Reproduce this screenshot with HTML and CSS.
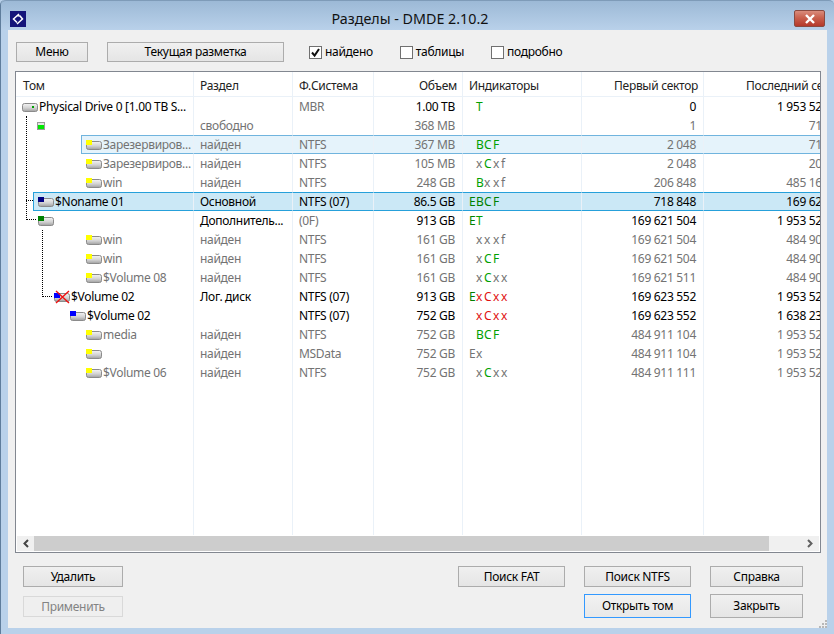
FILE: index.html
```html
<!DOCTYPE html>
<html lang="ru">
<head>
<meta charset="utf-8">
<title>Разделы - DMDE 2.10.2</title>
<link rel="stylesheet" href="styles.css">
</head>
<body>
<svg class="defs" width="0" height="0" aria-hidden="true">
  <defs>
    <linearGradient id="disk" x1="0" y1="0" x2="0" y2="1">
      <stop offset="0" stop-color="#f4f4f4"/>
      <stop offset="0.55" stop-color="#d2d2d2"/>
      <stop offset="1" stop-color="#a0a0a0"/>
    </linearGradient>
    <symbol id="vol" viewBox="0 0 16 11">
      <rect x="0.5" y="1.5" width="15" height="8" rx="2" fill="url(#disk)" stroke="#8b8b8b"/>
    </symbol>
  </defs>
</svg>
<div class="window">
  <header class="titlebar">
    <svg class="appicon" width="16" height="16" viewBox="0 0 16 16">
      <rect width="16" height="16" fill="#14147a"/>
      <path d="M9 3 3.500 8 7 11.500M7 4.500 10 5 12.500 8 7 13" fill="none" stroke="#fff" stroke-width="1.500"/>
    </svg>
    <div class="title">Разделы - DMDE 2.10.2</div>
    <div class="close">
      <svg width="12" height="10" viewBox="0 0 12 10"><path d="M2 1 10 9M10 1 2 9" stroke="#fff" stroke-width="2.400"/></svg>
    </div>
  </header>
  <main class="client">
    <div class="toolbar">
      <button class="btn menu">Меню</button>
      <button class="btn layout">Текущая разметка</button>
      <label class="check c1"><span class="box"><svg width="11" height="11" viewBox="0 0 11 11"><path d="M2 5.500 4.600 8.600 9 2" fill="none" stroke="#111" stroke-width="2"/></svg></span>найдено</label>
      <label class="check c2"><span class="box"></span>таблицы</label>
      <label class="check c3"><span class="box"></span>подробно</label>
    </div>
    <section class="table">
      <div class="row head">
        <div class="cell">Том</div>
        <div class="cell">Раздел</div>
        <div class="cell">Ф.Система</div>
        <div class="cell num">Объем</div>
        <div class="cell">Индикаторы</div>
        <div class="cell num">Первый сектор</div>
        <div class="cell num">Последний сектор</div>
      </div>
      <div class="rows">
        <i class="dot v v1"></i><i class="dot h h1"></i><i class="dot h h2"></i><i class="dot v v2"></i><i class="dot h h3"></i>

        <div class="row">
          <div class="cell name d0"><svg class="ic" width="16" height="11" viewBox="0 0 16 11"><use href="#vol"/><rect x="10" y="4" width="2" height="2" fill="#00a000"/></svg>Physical Drive 0 [1.00 TB S...</div>
          <div class="cell"></div>
          <div class="cell g">MBR</div>
          <div class="cell num">1.00 TB</div>
          <div class="cell ind"><b class="e"></b><b class="ok">T</b></div>
          <div class="cell num">0</div>
          <div class="cell num">1 953 525 167</div>
        </div>

        <div class="row g">
          <div class="cell name d1s"><svg class="ic" width="8" height="8" viewBox="0 0 8 8"><rect x="0.500" y="0.500" width="7" height="7" fill="#e4e4e4" stroke="#9a9a9a"/><rect x="1" y="3" width="6" height="4" fill="#00e800"/></svg></div>
          <div class="cell">свободно</div>
          <div class="cell"></div>
          <div class="cell num">368 MB</div>
          <div class="cell ind"></div>
          <div class="cell num">1</div>
          <div class="cell num">718 847</div>
        </div>

        <div class="row g hover">
          <div class="cell name d3"><svg class="ic" width="16" height="11" viewBox="0 0 16 11"><use href="#vol"/><rect width="6" height="5" fill="#ffff00"/></svg>Зарезервиров...</div>
          <div class="cell">найден</div>
          <div class="cell">NTFS</div>
          <div class="cell num">367 MB</div>
          <div class="cell ind"><b class="e"></b><b class="ok">B</b><b class="c ok">C</b><b class="ok">F</b></div>
          <div class="cell num">2 048</div>
          <div class="cell num">718 847</div>
        </div>

        <div class="row g">
          <div class="cell name d3"><svg class="ic" width="16" height="11" viewBox="0 0 16 11"><use href="#vol"/><rect width="6" height="5" fill="#ffff00"/></svg>Зарезервиров...</div>
          <div class="cell">найден</div>
          <div class="cell">NTFS</div>
          <div class="cell num">105 MB</div>
          <div class="cell ind"><b class="e"></b><b>x</b><b class="c ok">C</b><b>x</b><b>f</b></div>
          <div class="cell num">2 048</div>
          <div class="cell num">206 847</div>
        </div>

        <div class="row g">
          <div class="cell name d3"><svg class="ic" width="16" height="11" viewBox="0 0 16 11"><use href="#vol"/><rect width="6" height="5" fill="#ffff00"/></svg>win</div>
          <div class="cell">найден</div>
          <div class="cell">NTFS</div>
          <div class="cell num">248 GB</div>
          <div class="cell ind"><b class="e"></b><b class="ok">B</b><b class="c">x</b><b>x</b><b>f</b></div>
          <div class="cell num">206 848</div>
          <div class="cell num">485 167 103</div>
        </div>

        <div class="row selected">
          <div class="cell name d1"><svg class="ic" width="16" height="11" viewBox="0 0 16 11"><use href="#vol"/><rect width="6" height="5" fill="#000080"/></svg>$Noname 01</div>
          <div class="cell">Основной</div>
          <div class="cell">NTFS (07)</div>
          <div class="cell num">86.5 GB</div>
          <div class="cell ind"><b class="e dk">E</b><b class="dk">B</b><b class="c dk">C</b><b class="dk">F</b></div>
          <div class="cell num">718 848</div>
          <div class="cell num">169 621 503</div>
        </div>

        <div class="row">
          <div class="cell name d1p"><svg class="ic" width="16" height="11" viewBox="0 0 16 11"><use href="#vol"/><rect width="6" height="5" fill="#008000"/></svg></div>
          <div class="cell">Дополнитель...</div>
          <div class="cell g">(0F)</div>
          <div class="cell num">913 GB</div>
          <div class="cell ind"><b class="e dk">E</b><b class="ok">T</b></div>
          <div class="cell num">169 621 504</div>
          <div class="cell num">1 953 525 167</div>
        </div>

        <div class="row g">
          <div class="cell name d3"><svg class="ic" width="16" height="11" viewBox="0 0 16 11"><use href="#vol"/><rect width="6" height="5" fill="#ffff00"/></svg>win</div>
          <div class="cell">найден</div>
          <div class="cell">NTFS</div>
          <div class="cell num">161 GB</div>
          <div class="cell ind"><b class="e"></b><b>x</b><b class="c">x</b><b>x</b><b>f</b></div>
          <div class="cell num">169 621 504</div>
          <div class="cell num">484 909 055</div>
        </div>

        <div class="row g">
          <div class="cell name d3"><svg class="ic" width="16" height="11" viewBox="0 0 16 11"><use href="#vol"/><rect width="6" height="5" fill="#ffff00"/></svg>win</div>
          <div class="cell">найден</div>
          <div class="cell">NTFS</div>
          <div class="cell num">161 GB</div>
          <div class="cell ind"><b class="e"></b><b>x</b><b class="c ok">C</b><b class="ok">F</b></div>
          <div class="cell num">169 621 504</div>
          <div class="cell num">484 909 055</div>
        </div>

        <div class="row g">
          <div class="cell name d3"><svg class="ic" width="16" height="11" viewBox="0 0 16 11"><use href="#vol"/><rect width="6" height="5" fill="#ffff00"/></svg>$Volume 08</div>
          <div class="cell">найден</div>
          <div class="cell">NTFS</div>
          <div class="cell num">161 GB</div>
          <div class="cell ind"><b class="e"></b><b>x</b><b class="c ok">C</b><b>x</b><b>x</b></div>
          <div class="cell num">169 621 511</div>
          <div class="cell num">484 909 062</div>
        </div>

        <div class="row">
          <div class="cell name d2"><svg class="ic" width="16" height="14" viewBox="0 0 16 14"><g transform="translate(0 2)"><use href="#vol" width="16" height="11"/><rect y="1" width="6" height="5" fill="#0000ff"/></g><path d="M2 1 15 13M15 1 2 13" stroke="#f01010" stroke-width="1.400"/></svg>$Volume 02</div>
          <div class="cell">Лог. диск</div>
          <div class="cell">NTFS (07)</div>
          <div class="cell num">913 GB</div>
          <div class="cell ind"><b class="e dk">E</b><b class="bad">x</b><b class="c bad">C</b><b class="bad">x</b><b class="bad">x</b></div>
          <div class="cell num">169 623 552</div>
          <div class="cell num">1 953 525 167</div>
        </div>

        <div class="row">
          <div class="cell name d2b"><svg class="ic" width="16" height="11" viewBox="0 0 16 11"><use href="#vol"/><rect width="6" height="5" fill="#0000ff"/></svg>$Volume 02</div>
          <div class="cell"></div>
          <div class="cell">NTFS (07)</div>
          <div class="cell num">752 GB</div>
          <div class="cell ind"><b class="e"></b><b class="bad">x</b><b class="c bad">C</b><b class="bad">x</b><b class="bad">x</b></div>
          <div class="cell num">169 623 552</div>
          <div class="cell num">1 638 234 111</div>
        </div>

        <div class="row g">
          <div class="cell name d3"><svg class="ic" width="16" height="11" viewBox="0 0 16 11"><use href="#vol"/><rect width="6" height="5" fill="#ffff00"/></svg>media</div>
          <div class="cell">найден</div>
          <div class="cell">NTFS</div>
          <div class="cell num">752 GB</div>
          <div class="cell ind"><b class="e"></b><b class="ok">B</b><b class="c ok">C</b><b class="ok">F</b></div>
          <div class="cell num">484 911 104</div>
          <div class="cell num">1 953 525 167</div>
        </div>

        <div class="row g">
          <div class="cell name d3"><svg class="ic" width="16" height="11" viewBox="0 0 16 11"><use href="#vol"/><rect width="6" height="5" fill="#ffff00"/></svg></div>
          <div class="cell">найден</div>
          <div class="cell">MSData</div>
          <div class="cell num">752 GB</div>
          <div class="cell ind"><b class="e">E</b><b>x</b></div>
          <div class="cell num">484 911 104</div>
          <div class="cell num">1 953 525 167</div>
        </div>

        <div class="row g">
          <div class="cell name d3"><svg class="ic" width="16" height="11" viewBox="0 0 16 11"><use href="#vol"/><rect width="6" height="5" fill="#ffff00"/></svg>$Volume 06</div>
          <div class="cell">найден</div>
          <div class="cell">NTFS</div>
          <div class="cell num">752 GB</div>
          <div class="cell ind"><b class="e"></b><b>x</b><b class="c ok">C</b><b>x</b><b>x</b></div>
          <div class="cell num">484 911 111</div>
          <div class="cell num">1 953 525 167</div>
        </div>

        <div class="row filler">
          <div class="cell"></div><div class="cell"></div><div class="cell"></div><div class="cell"></div><div class="cell"></div><div class="cell"></div><div class="cell"></div>
        </div>
      </div>
      <div class="scrollbar">
        <div class="arrow"><svg width="8" height="9" viewBox="0 0 8 9"><path d="M6 1 2.500 4.500 6 8" fill="none" stroke="#444" stroke-width="2"/></svg></div>
        <div class="thumb"></div>
        <div class="track"><svg width="8" height="9" viewBox="0 0 8 9"><path d="M2 1 5.500 4.500 2 8" fill="none" stroke="#606060" stroke-width="2"/></svg></div>
      </div>
    </section>
    <footer class="actions">
      <div class="stack wide">
        <button class="btn">Удалить</button>
        <button class="btn off">Применить</button>
      </div>
      <div class="stack fat">
        <button class="btn">Поиск FAT</button>
      </div>
      <div class="stack mid">
        <button class="btn">Поиск NTFS</button>
        <button class="btn tall focus">Открыть том</button>
      </div>
      <div class="stack last">
        <button class="btn">Справка</button>
        <button class="btn tall">Закрыть</button>
      </div>
    </footer>
    <svg class="grip" width="8" height="8" viewBox="0 0 8 8"><path d="M6 0h2v2H6zM3 3h2v2H3zM6 3h2v2H6zM0 6h2v2H0zM3 6h2v2H3zM6 6h2v2H6z" fill="#b8b8b8"/></svg>
  </main>
</div>
</body>
</html>
```

FILE: styles.css
```css
* { box-sizing: border-box; }
html, body { margin: 0; height: 100%; overflow: hidden; background: #b9d1ea; }
body { font: 12px/16px "Noto Sans", "Open Sans", sans-serif; letter-spacing: -0.3px; color: #000; }
.defs { position: absolute; }

.window {
  width: 834px;
  height: 634px;
  display: flex;
  flex-direction: column;
  background: #b9d1ea;
  border-left: 1px solid #5f7d9c;
  border-radius: 5px 5px 0 0;
}
.titlebar {
  height: 30px;
  flex: none;
  display: flex;
  align-items: center;
  padding: 6px 9px 0 9px;
  background: linear-gradient(#9cb9d6, #b9d1ea);
  border-top: 1px solid #7e9bb8;
  border-radius: 5px 5px 0 0;
}
.appicon { flex: none; }
.title {
  flex: 1;
  text-align: center;
  font-size: 14.300px;
  letter-spacing: 0;
  color: #111;
}
.close {
  width: 31px;
  height: 17px;
  display: flex;
  align-items: center;
  justify-content: center;
  background: linear-gradient(#d98c7c, #c9614e 45%, #b5392b);
  border: 1px solid #8a4a40;
  border-radius: 2px;
}

.client {
  flex: 1;
  position: relative;
  margin: 0 7px 6px 7px;
  background: #f0f0f0;
  display: flex;
  flex-direction: column;
  padding: 12px 6px 0 7px;
}

.btn {
  font: inherit;
  letter-spacing: inherit;
  color: #000;
  height: 21px;
  padding: 0;
  border: 1px solid #acacac;
  background: linear-gradient(#f0f0f0, #e5e5e5);
  display: block;
}
.btn.off { color: #838383; border-color: #d9d9d9; background: #efefef; }
.btn.tall { height: 24px; }
.btn.focus { border-color: #3399ff; background: linear-gradient(#f2f2f2, #e8e8e8); }

.toolbar { display: flex; align-items: center; height: 20px; flex: none; padding-left: 1px; }
.menu { width: 72px; height: 20px; }
.layout { width: 177px; height: 20px; margin-left: 19px; }
.check { display: flex; align-items: center; color: #000; }
.c1 { margin-left: 25px; }
.c2 { margin-left: 27px; }
.c3 { margin-left: 27px; }
.box {
  width: 13px;
  height: 13px;
  border: 1px solid #707070;
  background: #fff;
  margin-right: 3px;
  display: flex;
  align-items: center;
  justify-content: center;
}

.table {
  margin-top: 9px;
  height: 482px;
  width: 806px;
  flex: none;
  border: 1px solid #828790;
  background: #fff;
  display: flex;
  flex-direction: column;
  overflow: hidden;
}
.row {
  display: grid;
  grid-template-columns: 178px 99px 81px 89px 119px 122px 155px;
  height: 19px;
  flex: none;
}
.head { height: 25px; border-bottom: 1px solid #eaf1f8; color: #222; }
.cell {
  display: flex;
  align-items: center;
  padding: 1px 2px 0 6px;
  white-space: nowrap;
  overflow: hidden;
  border-right: 1px solid #eaf1f8;
}
.head .cell { padding-top: 3px; padding-bottom: 0; padding-right: 5px; }
.head .cell:first-child { padding-left: 7px; }
.head .cell:last-child { padding-right: 10px; }
.rows {
  flex: 1;
  position: relative;
  display: flex;
  flex-direction: column;
  overflow: hidden;
}
.filler { flex: 1; }
.g { color: #737373; }
.num { justify-content: flex-end; padding-right: 7px; }

.name { padding-right: 0; }
.ic { flex: none; margin-right: 1px; }
.d0 { padding-left: 6px; }
.d1 { padding-left: 4px; margin-left: 17px; }
.d1p { padding-left: 22px; }
.d1s { padding-left: 21px; }
.d2 { padding-left: 38px; }
.d2b { padding-left: 54px; }
.d3 { padding-left: 70px; }
.hover .d3 { padding-left: 4px; margin-left: 65px; }

.hover .cell {
  background: #e5f3fb;
  border-top: 1px solid #70b4de;
  border-bottom: 1px solid #70b4de;
}
.hover .name { border-left: 1px solid #70b4de; }
.selected .cell {
  background: #cbe8f6;
  border-top: 1px solid #26a0da;
  border-bottom: 1px solid #26a0da;
}
.selected .name { border-left: 1px solid #26a0da; }

.ind { padding-left: 6px; }
.ind b { font-weight: 400; display: block; width: 8px; flex: none; }
.ind .e { width: 7px; }
.ind .c { width: 9px; }
.ok { color: #00a000; }
.dk { color: #008000; }
.bad { color: #e01010; }

.dot { position: absolute; z-index: 1; display: block; }
.v { width: 1px; border-left: 1px dotted #000; }
.h { height: 1px; border-top: 1px dotted #000; }
.v1 { left: 10px; top: 19px; height: 104px; }
.h1 { left: 10px; top: 103px; width: 7px; }
.h2 { left: 10px; top: 122px; width: 10px; }
.v2 { left: 26px; top: 133px; height: 67px; }
.h3 { left: 26px; top: 199px; width: 10px; }

.scrollbar {
  flex: none;
  height: 17px;
  padding: 1px;
  display: flex;
  background: #fff;
}
.arrow {
  width: 17px;
  background: #f0f0f0;
  display: flex;
  align-items: center;
  justify-content: center;
}
.thumb { width: 735px; background: #cdcdcd; }
.track {
  flex: 1;
  background: #f0f0f0;
  display: flex;
  align-items: center;
  justify-content: flex-end;
  padding-right: 5px;
}

.actions { display: flex; align-items: flex-start; margin-top: 13px; padding-left: 8px; }
.stack { display: flex; flex-direction: column; }
.stack .btn { width: 100%; }
.wide { width: 100px; gap: 9px; margin-right: 335px; }
.fat { width: 107px; margin-right: 19px; }
.mid { width: 107px; gap: 7px; margin-right: 19px; }
.last { width: 93px; gap: 7px; }

.grip { position: absolute; right: 0; bottom: 0; }
```
